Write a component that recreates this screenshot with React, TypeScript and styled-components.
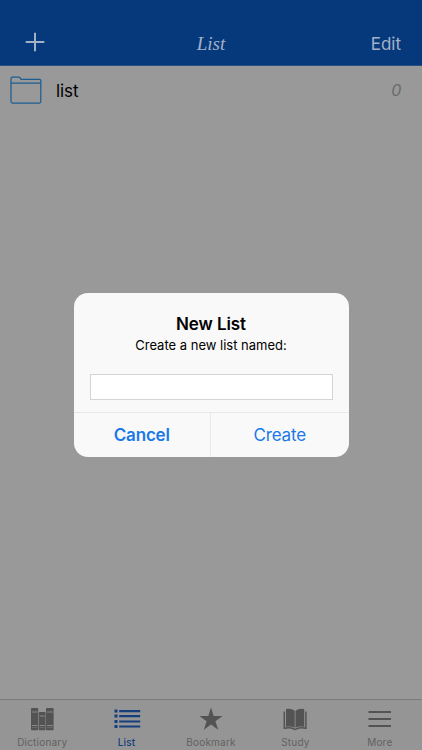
import React from "react";
import styled, { createGlobalStyle } from "styled-components";

const GlobalStyle = createGlobalStyle`
  * { box-sizing: border-box; }
  body { margin: 0; }
`;

const Screen = styled.div`
  position: relative;
  display: flex;
  flex-direction: column;
  width: 422px;
  height: 750px;
  overflow: hidden;
  background: #999999;
  font-family: Inter, "Liberation Sans", sans-serif;
`;

const NavBar = styled.header`
  display: grid;
  grid-template-columns: 1fr auto 1fr;
  align-items: center;
  height: 66px;
  padding: 21px 21px 0 25px;
  background: #06397b;
  border-bottom: 1px solid #2b4f83;
  color: #a3b1c6;
`;

const NavTitle = styled.h1`
  margin: 0;
  padding: 2px 4px 0 0;
  font: italic 400 19px/24px "Liberation Serif", serif;
`;

const NavButton = styled.button<{ $end?: boolean }>`
  display: flex;
  justify-self: ${(p) => (p.$end ? "end" : "start")};
  padding: ${(p) => (p.$end ? "2px 0 0" : "0 0 3px")};
  border: 0;
  background: none;
  color: inherit;
  font: 400 17px/22px Inter, sans-serif;
`;

const Content = styled.main`
  flex: 1;
`;

const ListRow = styled.div`
  display: flex;
  align-items: center;
  height: 49px;
  padding: 0 21px 0 10px;
`;

const RowName = styled.span`
  flex: 1;
  margin-left: 14px;
  color: #000;
  font-size: 17px;
  letter-spacing: -0.1px;
`;

const RowCount = styled.span`
  color: #6a6a6a;
  font: italic 400 17px/20px "Liberation Sans", sans-serif;
`;

const TabBar = styled.nav`
  display: grid;
  grid-template-columns: repeat(5, 1fr);
  height: 51px;
  background: #959595;
  border-top: 1px solid #7b7b7b;
`;

const Tab = styled.button<{ $active?: boolean }>`
  display: flex;
  flex-direction: column;
  align-items: center;
  padding: 5px 0 0;
  border: 0;
  background: none;
  color: ${(p) => (p.$active ? "#153e7c" : "#535353")};
`;

const TabLabel = styled.span<{ $active?: boolean }>`
  margin-top: 1px;
  color: ${(p) => (p.$active ? "#153e7c" : "#626262")};
  font: ${(p) => (p.$active ? 500 : 400)} 10px/12px Inter, sans-serif;
  letter-spacing: 0.2px;
`;

const AlertLayer = styled.div`
  position: absolute;
  inset: 0;
  display: flex;
  align-items: center;
  justify-content: center;
`;

const Alert = styled.section`
  display: flex;
  flex-direction: column;
  width: 275px;
  height: 164px;
  overflow: hidden;
  border-radius: 14px;
  background: #f9f9f9;
`;

const AlertBody = styled.div`
  display: flex;
  flex: 1;
  flex-direction: column;
  align-items: center;
  padding: 20px 16px 0;
`;

const AlertTitle = styled.h2`
  margin: 0;
  font-size: 17px;
  font-weight: 600;
  line-height: 22px;
  letter-spacing: -0.1px;
`;

const AlertMessage = styled.p`
  margin: 2px 0 20px;
  font-size: 13px;
  line-height: 17px;
`;

const NameField = styled.input`
  width: 243px;
  height: 26px;
  padding: 0 6px;
  border: 1px solid #d4d4d6;
  border-radius: 0;
  outline: none;
  background: #fff;
`;

const AlertActions = styled.div`
  display: grid;
  grid-template-columns: 1fr 1fr;
  height: 45px;
  border-top: 1px solid #e6e7e9;
`;

const AlertButton = styled.button<{ $strong?: boolean }>`
  padding: 0;
  border: 0;
  border-right: ${(p) => (p.$strong ? "1px solid #e8e9eb" : "0")};
  background: none;
  color: #1b78e8;
  font: ${(p) => (p.$strong ? 600 : 400)} 17px/22px Inter, sans-serif;
  letter-spacing: -0.2px;
`;

const PlusIcon = () => (
  <svg width="20" height="20" viewBox="0 0 20 20" stroke="currentColor" strokeWidth="2">
    <path d="M10 .7v18.6M.7 10h18.6" />
  </svg>
);

const FolderIcon = () => (
  <svg width="32" height="30" viewBox="0 0 32 30" fill="none" stroke="#1d5e91" strokeWidth="1.25">
    <path d="M1 25.5V2.2Q1 1 2.2 1H8.8Q9.8 1 10.3 2L11 3.4H29.6Q30.8 3.4 30.8 4.6V25.5Q30.8 27 29.3 27H2.5Q1 27 1 25.5ZM1 7.2H30.8" />
  </svg>
);

const BooksIcon = () => (
  <svg width="30" height="30" viewBox="0 0 30 30">
    <g fill="currentColor">
      <rect x="4" y="3" width="7.2" height="22.2" rx=".7" />
      <rect x="11.8" y="7" width="6.7" height="18.2" rx=".7" />
      <rect x="19" y="3" width="7.6" height="22.2" rx=".7" />
    </g>
    <path d="M5 7h5.5M5 20.5h5.5M12.7 11h5M12.7 20.5h5M20 7h5.8M20 20.5h5.8" stroke="#8a8a8a" strokeWidth="1" />
    <path d="M5 22.7h5.5M12.7 22.7h5M20 22.7h5.8" stroke="#777" strokeWidth=".7" />
  </svg>
);

const BulletsIcon = () => (
  <svg width="30" height="30" viewBox="0 0 30 30" fill="currentColor">
    <path d="M2.5 4.6h3v3h-3zM2.5 9.6h3v3h-3zM2.5 15h3v3h-3zM2.5 20h3v3h-3zM7.2 5h21v2.2h-21zM7.2 10h21v2.2h-21zM7.2 15.4h21v2.2h-21zM7.2 20.4h21v2.2h-21z" />
  </svg>
);

const StarIcon = () => (
  <svg width="30" height="30" viewBox="0 0 30 30" fill="currentColor">
    <path d="M15 2.6l2.7 8.5h8.9l-7.2 5.2 2.8 8.4-7.2-5.2-7.2 5.2 2.8-8.4-7.2-5.2h8.9z" />
  </svg>
);

const OpenBookIcon = () => (
  <svg width="30" height="30" viewBox="0 0 30 30" fill="currentColor">
    <path d="M6 4.1Q11 3.1 14.7 5.7V22.8Q11 20.6 6 21.8ZM24.2 4.1Q19.2 3.1 15.5 5.7V22.8Q19.2 20.6 24.2 21.8Z" />
    <path d="M4.3 6.5V23.2Q10 22 13.7 23.9Q15.1 25 16.5 23.9Q20.2 22 25.9 23.2V6.5" fill="none" stroke="currentColor" strokeWidth="1.5" />
  </svg>
);

const MenuIcon = () => (
  <svg width="30" height="30" viewBox="0 0 30 30" fill="currentColor">
    <path d="M3.5 6H26v2H3.5zM3.5 13H26v2H3.5zM3.5 20H26v2H3.5z" />
  </svg>
);

const tabs = [
  { label: "Dictionary", Icon: BooksIcon },
  { label: "List", Icon: BulletsIcon, active: true },
  { label: "Bookmark", Icon: StarIcon },
  { label: "Study", Icon: OpenBookIcon },
  { label: "More", Icon: MenuIcon },
];

export default function App() {
  return (
    <>
      <GlobalStyle />
      <Screen>
        <NavBar>
          <NavButton aria-label="Add list"><PlusIcon /></NavButton>
          <NavTitle>List</NavTitle>
          <NavButton $end>Edit</NavButton>
        </NavBar>
        <Content>
          <ListRow>
            <FolderIcon />
            <RowName>list</RowName>
            <RowCount>0</RowCount>
          </ListRow>
        </Content>
        <TabBar>
          {tabs.map(({ label, Icon, active }) => (
            <Tab key={label} $active={active}>
              <Icon />
              <TabLabel $active={active}>{label}</TabLabel>
            </Tab>
          ))}
        </TabBar>
        <AlertLayer>
          <Alert role="dialog" aria-label="New List">
            <AlertBody>
              <AlertTitle>New List</AlertTitle>
              <AlertMessage>Create a new list named:</AlertMessage>
              <NameField aria-label="List name" />
            </AlertBody>
            <AlertActions>
              <AlertButton $strong>Cancel</AlertButton>
              <AlertButton>Create</AlertButton>
            </AlertActions>
          </Alert>
        </AlertLayer>
      </Screen>
    </>
  );
}
